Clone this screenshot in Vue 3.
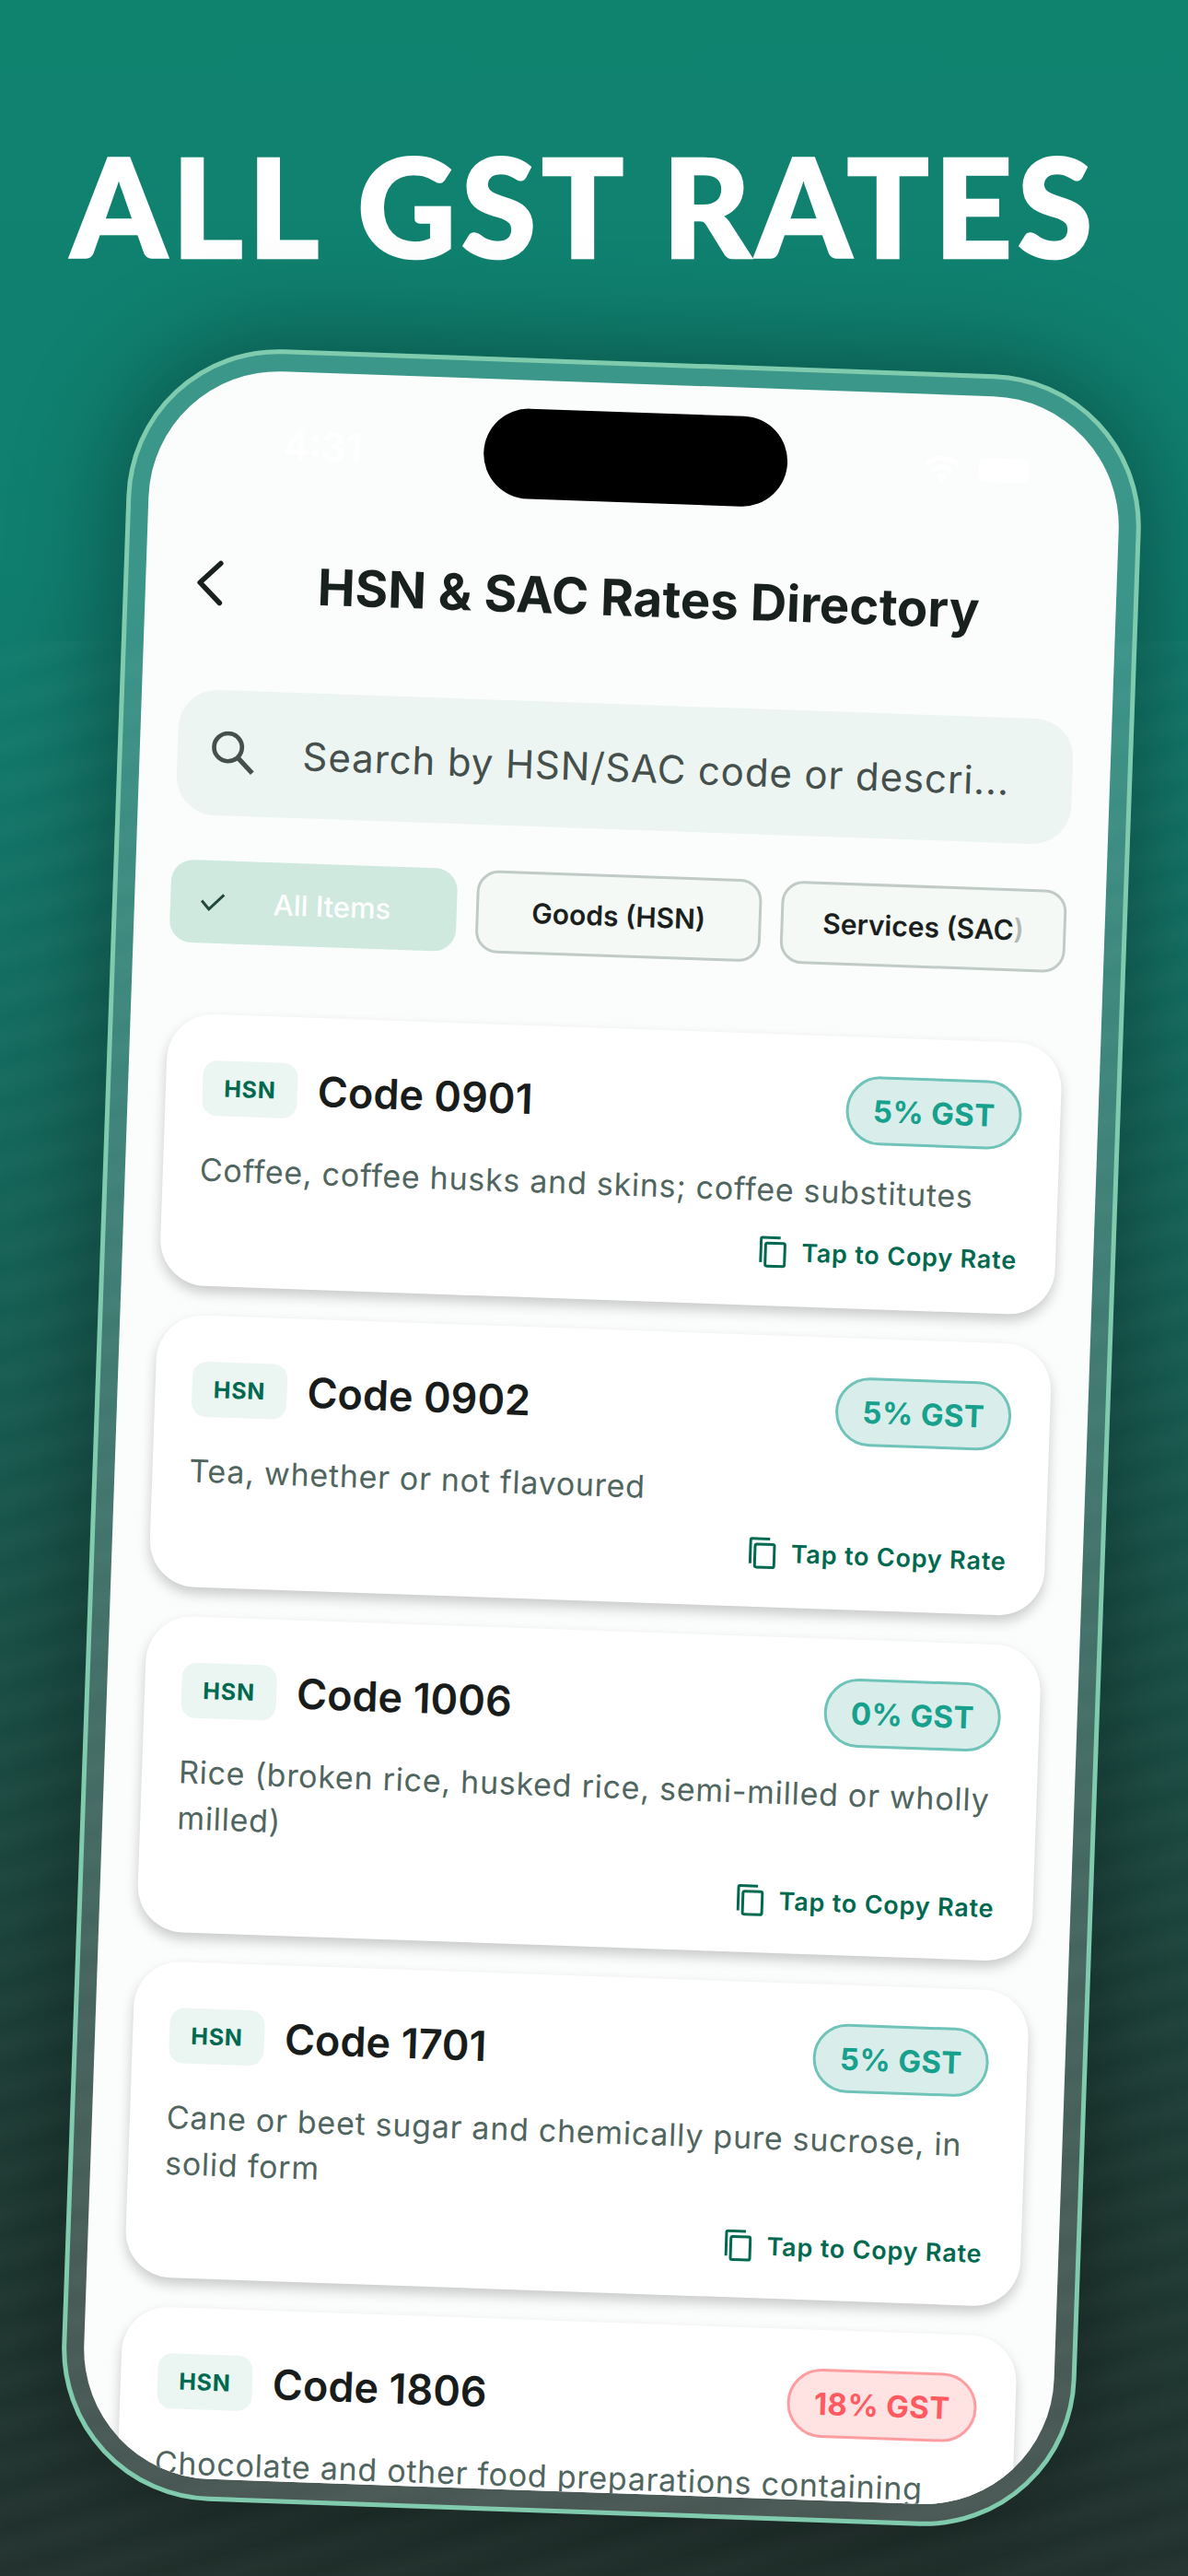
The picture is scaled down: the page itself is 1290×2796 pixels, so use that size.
<template>
  <div class="page">
    <h1 class="headline">ALL GST RATES</h1>

    <div class="phone">
      <div class="screen">
        <!-- island and status bar sit over the app content -->
        <div class="island"></div>
        <div class="status">
          <span class="clock">4:31</span>
          <div class="status-icons">
            <svg width="40" height="30" viewBox="0 0 40 30" fill="none" stroke="#fff" stroke-width="5">
              <path d="M3 11a24 24 0 0 1 34 0M10 18a14 14 0 0 1 20 0" />
              <circle cx="20" cy="25" r="2" fill="#fff" />
            </svg>
            <span class="battery"></span>
          </div>
        </div>

        <header class="top-bar">
          <svg class="back" width="30" height="50" viewBox="0 0 30 50" fill="none">
            <path d="M26 3.5 4 25l22 21.5" stroke="#18211e" stroke-width="5.5" stroke-linecap="round" stroke-linejoin="round" />
          </svg>
          <span class="top-title">HSN &amp; SAC Rates Directory</span>
        </header>

        <div class="search">
          <svg width="48" height="48" viewBox="0 0 46 46" fill="none" stroke="#45504c">
            <circle cx="17" cy="17" r="14.5" stroke-width="4.5" />
            <path d="M28 28l15 15" stroke-width="5" />
          </svg>
          <span class="search-text">Search by HSN/SAC code or descri...</span>
        </div>

        <div class="chips">
          <div class="chip chip-active">
            <svg width="28" height="20" viewBox="0 0 28 20" fill="none">
              <path d="M2 9l8 9L26 2" stroke="#22493d" stroke-width="3" />
            </svg>
            <span>All Items</span>
          </div>
          <div class="chip">Goods (HSN)</div>
          <div class="chip">
            <span>Services (SAC<span class="faded">)</span></span>
          </div>
        </div>

        <div class="list">
          <article v-for="item in items" :key="item.code" class="card">
            <div class="card-head">
              <span class="kind">HSN</span>
              <span class="code">Code {{ item.code }}</span>
              <span class="rate" :class="{ 'rate-high': item.rate >= 18 }">{{ item.rate }}% GST</span>
            </div>
            <p class="desc">{{ item.desc }}</p>
            <div class="copy">
              <svg width="30" height="35" viewBox="0 0 30 35" fill="none" stroke="#00694f" stroke-width="3">
                <path d="M2 29V3.5A1.5 1.5 0 0 1 3.5 2H23" />
                <rect x="7" y="8" width="21" height="25" rx="2" />
              </svg>
              <span>Tap to Copy Rate</span>
            </div>
          </article>
        </div>
      </div>
    </div>
  </div>
</template>

<script setup>
const items = [
  { code: "0901", rate: 5, desc: "Coffee, coffee husks and skins; coffee substitutes" },
  { code: "0902", rate: 5, desc: "Tea, whether or not flavoured" },
  { code: "1006", rate: 0, desc: "Rice (broken rice, husked rice, semi-milled or wholly milled)" },
  { code: "1701", rate: 5, desc: "Cane or beet sugar and chemically pure sucrose, in solid form" },
  { code: "1806", rate: 18, desc: "Chocolate and other food preparations containing cocoa" },
];
</script>

<style>
html,
body {
  margin: 0;
  background: #203530;
}
</style>

<style scoped>
.page {
  width: 1290px;
  height: 2796px;
  overflow: hidden;
  display: flex;
  flex-direction: column;
  background:
    repeating-linear-gradient(165deg, rgba(255, 255, 255, 0) 0, rgba(255, 255, 255, 0.022) 22px, rgba(255, 255, 255, 0) 44px) left bottom / 100% 2100px no-repeat,
    linear-gradient(180deg, #10836f 0%, #107f70 22%, #146a5e 42%, #195349 62%, #1e3d36 82%, #22312d 100%);
  font-family: Inter, "Noto Sans", sans-serif;
}

.headline {
  margin: 0;
  height: 392px;
  padding: 149px 0 0 77px;
  box-sizing: border-box;
  font-family: Lato, sans-serif;
  font-size: 148px;
  font-weight: 900;
  line-height: 1;
  letter-spacing: 5.5px;
  -webkit-text-stroke: 2.5px #fff;
  color: #fff;
  white-space: nowrap;
}

.phone {
  flex: none;
  width: 1102px;
  height: 2337px;
  margin-left: 102px;
  box-sizing: border-box;
  padding: 19px;
  border: 5px solid #80cbae;
  border-radius: 165px;
  background: rgba(255, 255, 255, 0.18);
  box-shadow: 0 0 120px rgba(0, 0, 0, 0.42);
  transform: rotate(2deg);
}

.screen {
  position: relative;
  height: 100%;
  box-sizing: border-box;
  padding: 0 41px;
  overflow: hidden;
  border-radius: 141px;
  background: #fbfdfc;
}

.island {
  position: absolute;
  top: 31px;
  left: 50%;
  width: 330px;
  height: 98px;
  margin-left: -165px;
  border-radius: 49px;
  background: #000;
}

.status {
  position: absolute;
  top: 54px;
  left: 144px;
  right: 100px;
  display: flex;
  align-items: center;
  justify-content: space-between;
  color: #fff;
}

.clock {
  font-size: 42px;
  font-weight: 600;
}

.status-icons {
  display: flex;
  align-items: center;
  gap: 20px;
}

.battery {
  width: 54px;
  height: 26px;
  border-radius: 7px;
  background: #fff;
}

.top-bar {
  display: flex;
  align-items: center;
  gap: 102px;
  height: 348px;
  box-sizing: border-box;
  padding: 116px 0 0 14px;
}

.top-title {
  font-size: 54.6px;
  font-weight: 700;
  color: #18211e;
  white-space: nowrap;
}

.search {
  display: flex;
  align-items: center;
  gap: 51px;
  height: 136px;
  box-sizing: border-box;
  padding-left: 37px;
  border-radius: 42px;
  background: #ecf5f2;
}

.search-text {
  font-size: 42px;
  letter-spacing: 0.9px;
  color: #454f4c;
  white-space: nowrap;
}

.chips {
  display: flex;
  gap: 21px;
  margin: 49px 0 77px -2px;
}

.chip {
  flex: none;
  width: 310px;
  height: 90px;
  box-sizing: border-box;
  display: flex;
  align-items: center;
  justify-content: center;
  border: 3px solid #c0cbc6;
  border-radius: 24px;
  background: #f4f9f6;
  font-size: 30px;
  font-weight: 600;
  color: #1b1f1e;
}

.chip-active {
  width: 311px;
  justify-content: flex-start;
  gap: 52px;
  padding-left: 32px;
  border: none;
  background: #cfe9df;
  font-size: 31px;
  font-weight: 500;
  color: #fff;
}

.faded {
  opacity: 0.3;
}

.list {
  display: flex;
  flex-direction: column;
  gap: 32px;
}

.card {
  flex: none;
  min-height: 295px;
  box-sizing: border-box;
  padding: 42px 42px 40px 40px;
  border-radius: 50px;
  background: #fff;
  box-shadow: 0 7px 14px rgba(0, 0, 0, 0.2);
}

.card-head {
  display: flex;
  align-items: center;
  gap: 22px;
}

.kind {
  width: 103px;
  height: 60px;
  display: flex;
  align-items: center;
  justify-content: center;
  border-radius: 16px;
  background: #ebf5f2;
  font-size: 25px;
  font-weight: 700;
  letter-spacing: 0.8px;
  color: #00694f;
}

.code {
  flex: 1;
  font-size: 45px;
  font-weight: 600;
  color: #181d1c;
}

.rate {
  height: 75px;
  box-sizing: border-box;
  display: flex;
  align-items: center;
  padding: 0 26px;
  border: 3px solid #6fc3b8;
  border-radius: 38px;
  background: #d9eeeb;
  font-size: 33px;
  font-weight: 700;
  letter-spacing: 0.3px;
  color: #17a08c;
}

.rate-high {
  border-color: #ff9c9f;
  background: #ffe3e3;
  color: #ff5a5f;
}

.desc {
  margin: 27px 0 25px;
  font-size: 34px;
  line-height: 50px;
  letter-spacing: 0.74px;
  color: #506560;
}

.copy {
  display: flex;
  align-items: center;
  justify-content: flex-end;
  gap: 16px;
  height: 34px;
  font-size: 27px;
  font-weight: 600;
  letter-spacing: 0.8px;
  color: #00694f;
}
</style>
